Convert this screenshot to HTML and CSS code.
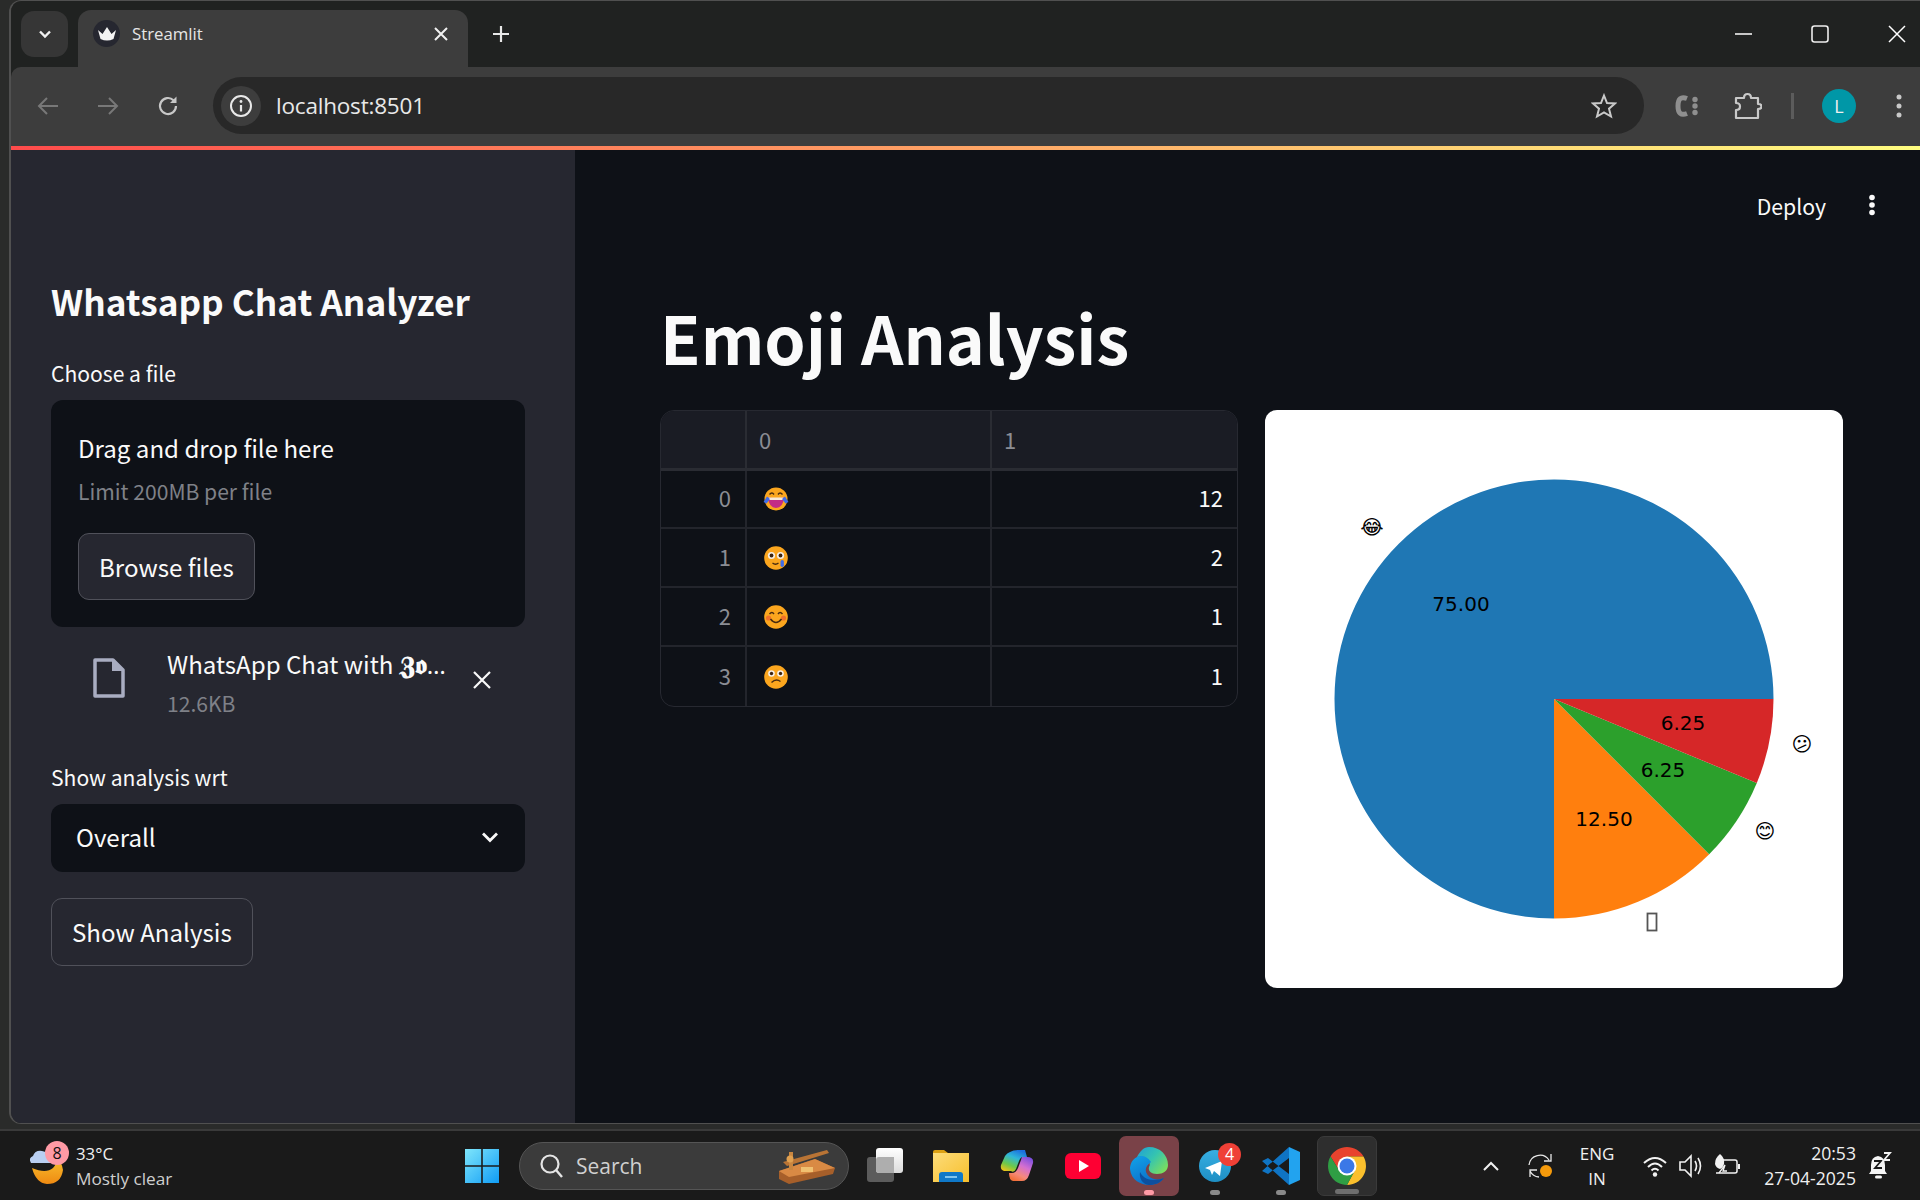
FILE: index.html
```html
<!DOCTYPE html>
<html lang="en">
<head>
<meta charset="utf-8">
<title>Streamlit</title>
<link rel="stylesheet" href="styles.css">
</head>
<body>
<div class="desktop">
  <div class="window">
    <div class="tabstrip">
      <div class="tabsearch"><svg width="16" height="16" viewBox="0 0 16 16"><path d="M3 5.5 8 10.5 13 5.5" fill="none" stroke="#f0f0f0" stroke-width="2.4"/></svg></div>
      <div class="tab">
        <div class="favicon"><svg width="20" height="16" viewBox="0 0 20 16"><path d="M1 4 5.500 8 10 1 14.500 8 19 4 16.500 13Q10 16 3.500 13Z" fill="#f4f4f4"/></svg></div>
        <span class="tabtitle">Streamlit</span>
        <svg class="tabclose" width="16" height="16" viewBox="0 0 16 16"><path d="M2 2 14 14M14 2 2 14" stroke="#f0f0f0" stroke-width="2"/></svg>
      </div>
      <svg class="newtab" width="20" height="20" viewBox="0 0 20 20"><path d="M10 2V18M2 10H18" stroke="#e8e8e8" stroke-width="2.200"/></svg>
      <div class="wincontrols">
        <svg width="18" height="18" viewBox="0 0 18 18"><path d="M1 9H18" stroke="#fff" stroke-width="1.600"/></svg>
        <svg width="18" height="18" viewBox="0 0 18 18"><rect x="1" y="1" width="16" height="16" rx="2.500" fill="none" stroke="#eee" stroke-width="1.600"/></svg>
        <svg width="18" height="18" viewBox="0 0 18 18"><path d="M1 1 17 17M17 1 1 17" stroke="#fff" stroke-width="1.500"/></svg>
      </div>
    </div>
    <div class="toolbar">
      <svg class="navicon" width="24" height="24" viewBox="0 0 24 24"><path d="M22 12H3M11 4 3 12 11 20" fill="none" stroke="#787878" stroke-width="2"/></svg>
      <svg class="navicon" width="24" height="24" viewBox="0 0 24 24"><path d="M2 12H21M13 4 21 12 13 20" fill="none" stroke="#787878" stroke-width="2"/></svg>
      <svg class="navicon" width="24" height="24" viewBox="0 0 24 24"><path d="M20 12A8 8 0 1 1 17.500 6.200" fill="none" stroke="#c7c7c7" stroke-width="2.200"/><path d="M20.500 2.500V9H14Z" fill="#c7c7c7"/></svg>
      <div class="omnibox">
        <div class="infochip"><svg width="24" height="24" viewBox="0 0 24 24"><circle cx="12" cy="12" r="10" fill="none" stroke="#e8e8e8" stroke-width="2"/><path d="M12 11V17.500" stroke="#e8e8e8" stroke-width="2.200"/><circle cx="12" cy="7.500" r="1.400" fill="#e8e8e8"/></svg></div>
        <span class="url">localhost:8501</span>
        <svg class="star" width="26" height="26" viewBox="0 0 26 26"><path d="M13 2.500 16 10 24 10.500 18 15.700 20 23.500 13 19.300 6 23.500 8 15.700 2 10.500 10 10Z" fill="none" stroke="#c9c9c9" stroke-width="2"/></svg>
      </div>
      <div class="tools">
        <svg class="tool-c" width="26" height="26" viewBox="0 0 26 26"><path d="M14 5.500Q5 2 5 13T14 20.500" fill="none" stroke="#8f8f8f" stroke-width="5"/><circle cx="22" cy="6.500" r="2.700" fill="#8f8f8f"/><circle cx="22" cy="13" r="2.700" fill="#8f8f8f"/><circle cx="22" cy="19.500" r="2.700" fill="#8f8f8f"/></svg>
        <svg class="tool-puzzle" width="28" height="28" viewBox="0 0 28 28"><path d="M2 6H10Q10 2 13.500 2T17 6H24V12Q27.500 12 27.500 14.500T24 17V26H2V18Q6 18 6 14.500T2 11Z" fill="none" stroke="#c9c9c9" stroke-width="2.200" stroke-linejoin="round"/></svg>
        <div class="toolsep"></div>
        <div class="avatar">L</div>
        <svg class="toolmenu" width="8" height="26" viewBox="0 0 8 26"><circle cx="4" cy="4" r="2.500" fill="#c9c9c9"/><circle cx="4" cy="13" r="2.500" fill="#c9c9c9"/><circle cx="4" cy="22" r="2.500" fill="#c9c9c9"/></svg>
      </div>
    </div>
    <div class="decoration"></div>
    <div class="app">
      <aside class="sidebar">
        <h2 class="side-title">Whatsapp Chat Analyzer</h2>
        <label class="field-label">Choose a file</label>
        <div class="dropzone">
          <div class="drop-main">Drag and drop file here</div>
          <div class="drop-sub">Limit 200MB per file</div>
          <button class="st-btn browse">Browse files</button>
        </div>
        <div class="file-row">
          <svg class="file-icon" width="32" height="40" viewBox="0 0 32 40"><path d="M2 2H20L30 12V38H2Z" fill="none" stroke="#a9adc1" stroke-width="3.500" stroke-linejoin="round"/><path d="M19 2V13H30Z" fill="#a9adc1"/></svg>
          <div class="file-text">
            <div class="file-name">WhatsApp Chat with <span class="fraktur">𝖅𝖔</span><span class="ell">…</span></div>
            <div class="file-size">12.6KB</div>
          </div>
          <svg class="file-x" width="20" height="20" viewBox="0 0 20 20"><path d="M2 2 18 18M18 2 2 18" stroke="#fafafa" stroke-width="2.200"/></svg>
        </div>
        <label class="field-label second">Show analysis wrt</label>
        <div class="select">
          <span>Overall</span>
          <svg width="18" height="12" viewBox="0 0 18 12"><path d="M2 2.500 9 9.500 16 2.500" fill="none" stroke="#fafafa" stroke-width="2.800"/></svg>
        </div>
        <button class="st-btn analyze">Show Analysis</button>
      </aside>
      <main class="main">
        <div class="main-header">
          <span class="deploy">Deploy</span>
          <svg width="8" height="22" viewBox="0 0 8 22"><circle cx="4" cy="3.500" r="2.800" fill="#fafafa"/><circle cx="4" cy="11" r="2.800" fill="#fafafa"/><circle cx="4" cy="18.500" r="2.800" fill="#fafafa"/></svg>
        </div>
        <h1 class="page-title">Emoji Analysis</h1>
        <div class="columns">
          <div class="table-wrap">
            <table class="frame">
              <colgroup><col class="c-idx"><col class="c-a"><col class="c-b"></colgroup>
              <thead><tr><th></th><th>0</th><th>1</th></tr></thead>
              <tbody>
                <tr><td class="idx">0</td><td class="emo"><svg width="26" height="26" viewBox="0 0 26 26"><circle cx="13" cy="13" r="11.500" fill="#fba61e"/><path d="M5 11.500Q13 13 21 11.500Q20 22 13 22T5 11.500Z" fill="#c22b86"/><path d="M5.500 11.500H20.500L20 14H6Z" fill="#f8e8d8"/><path d="M6.500 8.500Q9 5.500 11 8.500M15 8.500Q17 5.500 19.500 8.500" fill="none" stroke="#4a2c10" stroke-width="1.400"/><path d="M0.500 16 4 10.500 7 13 3.500 17.500Z M25.500 16 22 10.500 19 13 22.500 17.500Z" fill="#3f6ce8"/></svg></td><td class="num">12</td></tr>
                <tr><td class="idx">1</td><td class="emo"><svg width="26" height="26" viewBox="0 0 26 26"><circle cx="13" cy="13" r="11.800" fill="#fba61e"/><circle cx="8.500" cy="10.500" r="3.600" fill="#f5efe6"/><circle cx="17.500" cy="10.500" r="3.600" fill="#f5efe6"/><circle cx="8.500" cy="10.500" r="1.900" fill="#3c2410"/><circle cx="17.500" cy="10.500" r="1.900" fill="#3c2410"/><path d="M9.500 18Q12.500 20.500 15.500 18" fill="none" stroke="#4a2c10" stroke-width="1.300"/><rect x="17.500" y="15" width="3.400" height="7" rx="1.700" fill="#3f6ce8"/></svg></td><td class="num">2</td></tr>
                <tr><td class="idx">2</td><td class="emo"><svg width="26" height="26" viewBox="0 0 26 26"><circle cx="13" cy="13" r="11.800" fill="#fba61e"/><circle cx="5.500" cy="14" r="2.600" fill="#f0702a"/><circle cx="20.500" cy="14" r="2.600" fill="#f0702a"/><path d="M6.500 10Q9 7 11 10M15 10Q17 7 19.500 10" fill="none" stroke="#4a2c10" stroke-width="1.400"/><path d="M7.500 15Q13 22 18.500 15" fill="none" stroke="#4a2c10" stroke-width="1.500"/></svg></td><td class="num">1</td></tr>
                <tr><td class="idx">3</td><td class="emo"><svg width="26" height="26" viewBox="0 0 26 26"><circle cx="13" cy="13" r="11.800" fill="#fba61e"/><circle cx="8.500" cy="9.500" r="3.300" fill="#f5efe6"/><circle cx="17.500" cy="9.500" r="3.300" fill="#f5efe6"/><circle cx="8.500" cy="9.500" r="1.700" fill="#3c2410"/><circle cx="17.500" cy="9.500" r="1.700" fill="#3c2410"/><path d="M8.500 18.500Q13 14 17.500 17.500" fill="none" stroke="#4a2c10" stroke-width="1.400"/></svg></td><td class="num">1</td></tr>
              </tbody>
            </table>
          </div>
          <div class="chart-card">
            <svg class="pie" width="578" height="578" viewBox="0 0 578 578">
              <path d="M289 289L508.500 289A219.500 219.500 0 1 0 289 508.500Z" fill="#1f77b4"/>
              <path d="M289 289L289 508.500A219.500 219.500 0 0 0 444.200 444.200Z" fill="#ff7f0e"/>
              <path d="M289 289L444.200 444.200A219.500 219.500 0 0 0 491.800 373Z" fill="#2ca02c"/>
              <path d="M289 289L491.800 373A219.500 219.500 0 0 0 508.500 289Z" fill="#d62728"/>
              <g class="pie-pct">
                <text x="196" y="201">75.00</text>
                <text x="339" y="416">12.50</text>
                <text x="398" y="367">6.25</text>
                <text x="418" y="320">6.25</text>
              </g>
              <g class="pie-lab">
                <text x="107" y="124">😂&#xFE0E;</text>
                <text x="537" y="341">😕&#xFE0E;</text>
                <text x="500" y="428">😊&#xFE0E;</text>
              </g>
              <rect x="382.500" y="503.500" width="9" height="17" fill="none" stroke="#555" stroke-width="1.800"/>
            </svg>
          </div>
        </div>
      </main>
    </div>
  </div>
  <div class="taskbar">
    <div class="weather">
      <div class="weather-icon">
        <svg width="40" height="44" viewBox="0 0 40 44"><defs><linearGradient id="moon" x1="0" y1="0" x2="0" y2="1"><stop offset="0" stop-color="#f9c02e"/><stop offset="1" stop-color="#ef8a12"/></linearGradient></defs><path d="M28 12Q34 16 35 24 33 38 19 38 8 37 4 22Q18 28 25 22 29 18 28 12Z" fill="url(#moon)"/><path d="M3 17Q0 12 5 10 7 4 14 5 20 6 22 11 26 13 24 17Z" fill="#b9cff2"/></svg>
        <span class="weather-badge">8</span>
      </div>
      <div class="weather-text">
        <div class="w-temp">33°C</div>
        <div class="w-desc">Mostly clear</div>
      </div>
    </div>
    <div class="start"><svg width="36" height="36" viewBox="0 0 36 36"><defs><linearGradient id="win" x1="0" y1="0" x2="1" y2="1"><stop offset="0" stop-color="#7fe6fb"/><stop offset="1" stop-color="#109cf5"/></linearGradient></defs><path d="M1 1H17.200V17.200H1ZM18.800 1H35V17.200H18.800ZM1 18.800H17.200V35H1ZM18.800 18.800H35V35H18.800Z" fill="url(#win)"/></svg></div>
    <div class="search">
      <svg width="26" height="28" viewBox="0 0 26 28"><circle cx="12" cy="12" r="8.500" fill="none" stroke="#e5e5e5" stroke-width="2.200"/><path d="M18 18 24 25" stroke="#e5e5e5" stroke-width="2.400"/></svg>
      <span>Search</span>
      <svg class="search-art" width="60" height="36" viewBox="0 0 60 36"><path d="M2 23 38 11 58 20 56 26 12 36 2 31Z" fill="#a65f2a"/><path d="M2 23 38 11 58 20 12 29Z" fill="#d98a44"/><path d="M6 14 50 2 52 5 10 18Z" fill="#b97435"/><rect x="12" y="4" width="4" height="18" fill="#c9863f"/><circle cx="13" cy="11" r="3.500" fill="#e0a050"/><rect x="24" y="19" width="12" height="5" fill="#f0c070"/></svg>
    </div>
    <div class="pinned">
      <div class="pin"><svg width="38" height="36" viewBox="0 0 38 36"><defs><linearGradient id="tv" x1="0" y1="0" x2="0" y2="1"><stop offset="0" stop-color="#ffffff"/><stop offset="1" stop-color="#dcdcdc"/></linearGradient></defs><rect x="1" y="9" width="27" height="25" rx="3" fill="#5c5c5c"/><rect x="10" y="0" width="27" height="25" rx="3" fill="url(#tv)"/><path d="M10 12Q10 9 13 9H28V25H13Q10 25 10 22Z" fill="#aeaeae"/></svg></div>
      <div class="pin"><svg width="36" height="32" viewBox="0 0 36 32"><defs><linearGradient id="fold" x1="0" y1="0" x2="1" y2="1"><stop offset="0" stop-color="#fcdc7a"/><stop offset="1" stop-color="#f8bf2c"/></linearGradient></defs><path d="M0 2Q0 0 2 0H11L15 3H36V10H0Z" fill="#dba013"/><rect x="0" y="3" width="36" height="29" fill="url(#fold)"/><path d="M6 32V25Q6 22 9 22H27Q30 22 30 25V32Z" fill="#0f78c8"/><rect x="12" y="26" width="12" height="2" fill="#7fc4ee"/></svg></div>
      <div class="pin"><svg width="34" height="32" viewBox="0 0 34 32"><defs><linearGradient id="cop1" x1="0.700" y1="0" x2="0.200" y2="1"><stop offset="0" stop-color="#1b6fe0"/><stop offset="0.350" stop-color="#2fb7d8"/><stop offset="0.700" stop-color="#6dc84a"/><stop offset="1" stop-color="#f2c417"/></linearGradient><linearGradient id="cop2" x1="0.800" y1="0" x2="0.300" y2="1"><stop offset="0" stop-color="#7a4fe0"/><stop offset="0.400" stop-color="#d46fd0"/><stop offset="0.750" stop-color="#f58a7a"/><stop offset="1" stop-color="#f2703a"/></linearGradient></defs><path d="M10 2Q13 0 18 0H25L27 7H22Q20 8 19 11L16 19Q14 23 11 21H4Q0 20 1 15L5 6Q7 3 10 2Z" fill="url(#cop1)"/><path d="M22 7H27Q34 7 33 13L29 25Q27 31 22 31H13Q9 30 9 23H12Q16 23 18 18L21 10Q21.500 8 22 7Z" fill="url(#cop2)"/></svg></div>
      <div class="pin"><svg width="36" height="26" viewBox="0 0 36 26"><rect width="36" height="26" rx="6" fill="#fe0033"/><path d="M14 7 24 13 14 19Z" fill="#fff"/></svg></div>
      <div class="pin pin-edge"><svg width="38" height="38" viewBox="0 0 38 38"><defs><linearGradient id="edg" x1="0" y1="0" x2="1" y2="0.800"><stop offset="0" stop-color="#1f9fd8"/><stop offset="0.500" stop-color="#35c4b0"/><stop offset="1" stop-color="#7fe05a"/></linearGradient><linearGradient id="edg2" x1="0" y1="0" x2="0.600" y2="1"><stop offset="0" stop-color="#11a3e8"/><stop offset="1" stop-color="#0c6cc8"/></linearGradient></defs><path d="M19 0C30 0 38 8 38 18 38 24 33 27 27 27 21 27 18 24 19 20 22 16 16 7 7 10 10 4 14 0 19 0Z" fill="url(#edg)"/><path d="M7 10C1 13 0 19 0 22 1 33 11 38 19 38 25 38 30 36 34 31 27 34 20 32 17 27 14 22 17 18 21 15 17 9 12 8 7 10Z" fill="url(#edg2)"/><path d="M19 38C12 37 9 31 10 25 12 29 16 33 23 33 28 33 31 32 34 31 30 36 25 38 19 38Z" fill="#0d4f9e"/></svg><i class="dot dot-pink"></i></div>
      <div class="pin pin-tg"><svg width="32" height="32" viewBox="0 0 32 32"><defs><linearGradient id="tg" x1="0.500" y1="0" x2="0.500" y2="1"><stop offset="0" stop-color="#37aee2"/><stop offset="1" stop-color="#1e8fc4"/></linearGradient></defs><circle cx="16" cy="16" r="16" fill="url(#tg)"/><path d="M6 18 23 11 21 26 15 21 13 25 11 20Z" fill="#fff"/></svg><span class="tg-badge">4</span><i class="dot"></i></div>
      <div class="pin pin-code"><svg width="38" height="38" viewBox="0 0 38 38"><path d="M27 0V11L6 27 0 24ZM27 38V27L6 11 0 14Z" fill="#0f74c4"/><path d="M27 0 38 5V33L27 38Z" fill="#22a3ef"/></svg><i class="dot"></i></div>
      <div class="pin pin-chrome"><svg width="38" height="38" viewBox="0 0 38 38"><path d="M2.550 9.500A19 19 0 0 1 35.450 9.500H19L11.200 23.500Z" fill="#e8432e"/><path d="M35.450 9.500A19 19 0 0 1 19 38L26.800 23.500 19 9.500Z" fill="#fbc02d"/><path d="M19 38A19 19 0 0 1 2.550 9.500L11.200 23.500H26.800Z" fill="#2f9e44"/><circle cx="19" cy="19" r="9.500" fill="#fff"/><circle cx="19" cy="19" r="7.500" fill="#3b78e7"/></svg><i class="pill"></i></div>
    </div>
    <div class="tray">
      <svg class="tray-up" width="16" height="10" viewBox="0 0 16 10"><path d="M1 9 8 2 15 9" fill="none" stroke="#f0f0f0" stroke-width="2"/></svg>
      <div class="tray-sync"><svg width="26" height="26" viewBox="0 0 26 26"><path d="M1 12A11 11 0 0 1 21 7M23 1V8H16M2 24V17H9M2 18A11 11 0 0 0 11 24" fill="none" stroke="#e8e8e8" stroke-width="1.300"/><circle cx="18" cy="18" r="6" fill="#f59a0b"/></svg></div>
      <div class="tray-lang"><div>ENG</div><div>IN</div></div>
      <svg width="26" height="24" viewBox="0 0 26 24"><path d="M2 9Q13 -1 24 9M6 13Q13 6 20 13M9.500 16.500Q13 13 16.500 16.500" fill="none" stroke="#f2f2f2" stroke-width="2"/><circle cx="13" cy="20.500" r="2.200" fill="#f2f2f2"/></svg>
      <svg width="26" height="26" viewBox="0 0 26 26"><path d="M2 9H7L13 3V23L7 17H2Z" fill="none" stroke="#f2f2f2" stroke-width="1.600"/><path d="M17 8Q20 13 17 18M20 5Q25 13 20 21" fill="none" stroke="#f2f2f2" stroke-width="1.600"/></svg>
      <svg width="26" height="26" viewBox="0 0 26 26"><path d="M8 7H21Q23 7 23 9V18Q23 20 21 20H2" fill="none" stroke="#f2f2f2" stroke-width="1.500"/><path d="M25 11V16" stroke="#f2f2f2" stroke-width="2"/><path d="M6 1Q11 5 10 11 9 15 6 16 2 15 1 11 1 5 6 1Z" fill="#f2f2f2"/><path d="M5 20 11 12 9 18H13" fill="none" stroke="#f2f2f2" stroke-width="1.300"/></svg>
      <div class="clock"><div>20:53</div><div>27-04-2025</div></div>
      <div class="bell"><svg width="24" height="28" viewBox="0 0 24 28"><path d="M10 4Q3 5 3 13V19L1 22H19L17 19V13Q17 5 10 4Z" fill="#f5f5f5"/><rect x="7" y="23.500" width="7" height="3" rx="1.500" fill="#f5f5f5"/><path d="M6 9H13L7 16H14" fill="none" stroke="#1a1a1a" stroke-width="1.800"/><path d="M16 1H22L16 8H22" fill="none" stroke="#f5f5f5" stroke-width="1.800"/></svg></div>
    </div>
  </div>
</div>
</body>
</html>
```

FILE: styles.css
```css
* { box-sizing: border-box; }
html, body { margin: 0; padding: 0; }
body { background: #2a2b2a; font-family: "Noto Sans CJK SC", "Noto Sans", sans-serif; color: #fafafa; overflow: hidden; }
.desktop { width: 1920px; height: 1200px; display: flex; flex-direction: column; background: #2a2b2a; }

.window { height: 1124px; flex: none; margin-left: 9px; padding: 2px 0 0 0; display: flex; flex-direction: column; border: 1px solid #505050; border-width: 1px 0 1px 2px; border-radius: 12px 0 0 12px; overflow: hidden; background: #202221; }

.tabstrip { height: 64px; flex: none; display: flex; align-items: flex-start; background: #202221; font-family: "Open Sans", sans-serif; }
.tabsearch { width: 47px; height: 46px; margin: 8px 0 0 10px; border-radius: 13px; background: #363636; display: flex; align-items: center; justify-content: center; }
.tab { width: 390px; height: 57px; margin: 7px 0 0 10px; background: #3d3d3d; border-radius: 13px 13px 0 0; display: flex; align-items: center; padding: 0 19px 10px 15px; }
.favicon { width: 27px; height: 27px; border-radius: 50%; background: #262730; display: flex; align-items: center; justify-content: center; }
.tabtitle { margin-left: 12px; font-size: 16.800px; color: #e6e6e6; flex: 1; }
.newtab { margin: 21px 0 0 23px; }
.wincontrols { margin: 22px 14px 0 auto; display: flex; gap: 59px; }

.toolbar { height: 79px; flex: none; display: flex; align-items: center; background: #3d3d3d; border-radius: 10px 0 0 0; padding: 0 0 2px 25px; }
.navicon { margin-right: 36px; }
.navicon:nth-child(3) { margin-right: 33px; }
.omnibox { width: 1431px; height: 57px; border-radius: 29px; background: #282828; display: flex; align-items: center; padding: 0 27px 0 8px; }
.infochip { width: 40px; height: 40px; border-radius: 50%; background: #3d3d3d; display: flex; align-items: center; justify-content: center; }
.url { margin-left: 15px; font-family: "Open Sans", sans-serif; font-size: 22.500px; color: #e8e8e8; flex: 1; letter-spacing: -0.2px; }
.tools { display: flex; align-items: center; margin-left: 29px; }
.tool-c { margin-right: 35px; }
.tool-puzzle { margin-right: 29px; }
.toolsep { width: 3px; height: 26px; background: #5c5c5c; margin-right: 28px; }
.avatar { width: 34px; height: 34px; border-radius: 50%; background: #0097a7; color: #f0f0f0; font: 18px/34px "Open Sans", sans-serif; text-align: center; margin-right: 39px; }

.decoration { height: 4px; flex: none; background: linear-gradient(90deg, #ff4b4b, #fffd80); }

.app { flex: 1; display: flex; min-height: 0; }
.sidebar { width: 564px; flex: none; background: #262730; padding: 127px 40px 0 40px; display: flex; flex-direction: column; align-items: flex-start; }
.side-title { margin: 0; font-size: 35.200px; line-height: 48px; font-weight: 700; color: #fafafa; }
.field-label { display: block; font-size: 21.100px; line-height: 30px; color: #fafafa; margin-top: 33px; }
.field-label.second { margin-top: 35px; }
.dropzone { width: 474px; height: 227px; margin-top: 12px; background: #0e1117; border-radius: 12px; padding: 28px 27px 0 27px; display: flex; flex-direction: column; align-items: flex-start; }
.drop-main { font-size: 24.100px; line-height: 40px; color: #fafafa; }
.drop-sub { font-size: 21.100px; line-height: 30px; margin-top: 8px; color: #7f8188; }
.st-btn { font-family: inherit; color: #fafafa; background: #262730; border: 1px solid #50515a; border-radius: 11px; font-size: 24.100px; line-height: 36px; height: 67px; padding: 0 20px; }
.browse { margin-top: 27px; }
.file-row { width: 474px; height: 90px; display: flex; align-items: flex-start; margin-top: 10px; padding: 0 0 0 42px; }
.file-icon { margin-top: 21px; flex: none; }
.file-text { width: 290px; margin-left: 42px; padding-top: 9px; }
.file-name { font-size: 24.100px; line-height: 34px; color: #fafafa; white-space: nowrap; font-family: "Noto Sans CJK SC", "DejaVu Sans", "DejaVu Serif", sans-serif; }
.fraktur { font-weight: 700; font-size: 26px; }
.ell { font-family: "Noto Sans", sans-serif; letter-spacing: 2px; }
.file-size { font-size: 21.100px; line-height: 30px; margin-top: 6px; color: #7f8188; }
.file-x { margin: 33px 0 0 15px; flex: none; }
.select { width: 474px; height: 68px; margin-top: 12px; background: #0e1117; border-radius: 12px; display: flex; align-items: center; justify-content: space-between; padding: 0 26px 3px 25px; font-size: 24.100px; color: #fafafa; }
.analyze { margin-top: 26px; padding: 0 20px; height: 68px; }

.main { flex: 1; background: #0e1117; padding: 0 77px 0 85px; display: flex; flex-direction: column; }
.main-header { display: flex; align-items: center; justify-content: flex-end; gap: 42px; height: 34px; margin: 38px -33px 0 0; }
.deploy { font-size: 21.200px; color: #fafafa; }
.page-title { margin: 67px 0 0 0; font-size: 66.100px; line-height: 94px; font-weight: 700; color: #fafafa; }
.columns { display: flex; gap: 27px; margin-top: 27px; align-items: flex-start; }

.table-wrap { width: 578px; height: 297px; flex: none; border: 1px solid #272931; border-radius: 14px; overflow: hidden; background: #0e1117; }
.frame { width: 100%; border-collapse: collapse; table-layout: fixed; font-size: 22px; }
.c-idx { width: 85px; }
.c-a { width: 245px; }
.frame th { height: 58px; background: #1a1c24; color: #8b8d94; font-weight: 400; text-align: left; padding: 0 12px; border-right: 2px solid #2a2c33; border-bottom: 3px solid #2a2c33; }
.frame td { height: 59px; padding: 0 14px 4px; border-right: 2px solid #23252c; border-bottom: 2px solid #23252c; color: #fafafa; line-height: 1; }
.frame tr > :last-child { border-right: 0; }
.frame tbody tr:last-child td { border-bottom: 0; height: 61px; }
.frame td.idx { text-align: right; color: #8b8d94; }
.frame td.num { text-align: right; }
.frame td.emo { padding-bottom: 0; }
.frame td.emo svg { display: block; margin-left: 2px; }

.chart-card { width: 578px; height: 578px; flex: none; background: #fff; border-radius: 12px; overflow: hidden; }
.pie { display: block; }
.pie-pct text { font: 20px "DejaVu Sans", sans-serif; fill: #000; text-anchor: middle; }
.pie-lab text { font: 20px "DejaVu Sans", sans-serif; fill: #000; text-anchor: middle; }

.taskbar { height: 71px; flex: none; margin-top: 5px; display: flex; align-items: center; background: #1a1a1a; border-top: 2px solid #3a3a3a; position: relative; color: #f0f0f0; font-family: "Open Sans", sans-serif; }
.weather { width: 452px; flex: none; display: flex; align-items: center; padding-left: 28px; }
.weather-icon { position: relative; width: 40px; height: 44px; margin-top: 4px; }
.weather-badge { position: absolute; left: 17px; top: -5px; width: 24px; height: 24px; border-radius: 50%; background: #ff9aa5; color: #111; font-size: 16px; line-height: 24px; text-align: center; }
.weather-text { margin-left: 8px; }
.w-temp { font-size: 16.800px; line-height: 25px; color: #f2f2f2; }
.w-desc { font-size: 17.200px; line-height: 25px; color: #cfcfcf; }
.start { width: 60px; height: 60px; display: flex; align-items: center; justify-content: center; flex: none; }
.search { width: 330px; height: 48px; margin-left: 7px; flex: none; border-radius: 24px; background: #3b3b3b; border: 1px solid #555; display: flex; align-items: center; padding: 0 11px 0 18px; font-size: 21px; color: #d0d0d0; }
.search span { margin-left: 12px; flex: 1; }
.pinned { display: flex; gap: 6px; margin-left: 6px; flex: none; }
.pin { position: relative; width: 60px; height: 60px; display: flex; align-items: center; justify-content: center; border-radius: 7px; }
.pin-edge { background: #7a4248; }
.pin-chrome { background: #2e2e2e; border: 1px solid #3a3a3a; }
.dot { position: absolute; left: 25px; bottom: 1px; width: 10px; height: 5px; border-radius: 3px; background: #8a8a8a; }
.dot-pink { background: #ff9aa5; }
.pill { position: absolute; left: 17px; bottom: 1px; width: 24px; height: 5px; border-radius: 3px; background: #6e6e6e; }
.tg-badge { position: absolute; right: 4px; top: 7px; width: 23px; height: 23px; border-radius: 50%; background: #ef4036; color: #fff; font-size: 16px; line-height: 23px; text-align: center; }
.tray { display: flex; align-items: center; margin-left: 106px; flex: none; }
.tray-up { margin-right: 29px; }
.tray-sync { margin-right: 23px; display: flex; }
.tray-lang { width: 40px; text-align: center; font-size: 17px; line-height: 25px; margin-right: 25px; color: #f0f0f0; }
.tray > svg:nth-of-type(2) { margin-right: 10px; }
.tray > svg:nth-of-type(3) { margin-right: 10px; }
.clock { width: 116px; text-align: right; font-size: 17.600px; line-height: 25px; color: #f0f0f0; }
.bell { margin-left: 12px; width: 24px; height: 28px; }
```
